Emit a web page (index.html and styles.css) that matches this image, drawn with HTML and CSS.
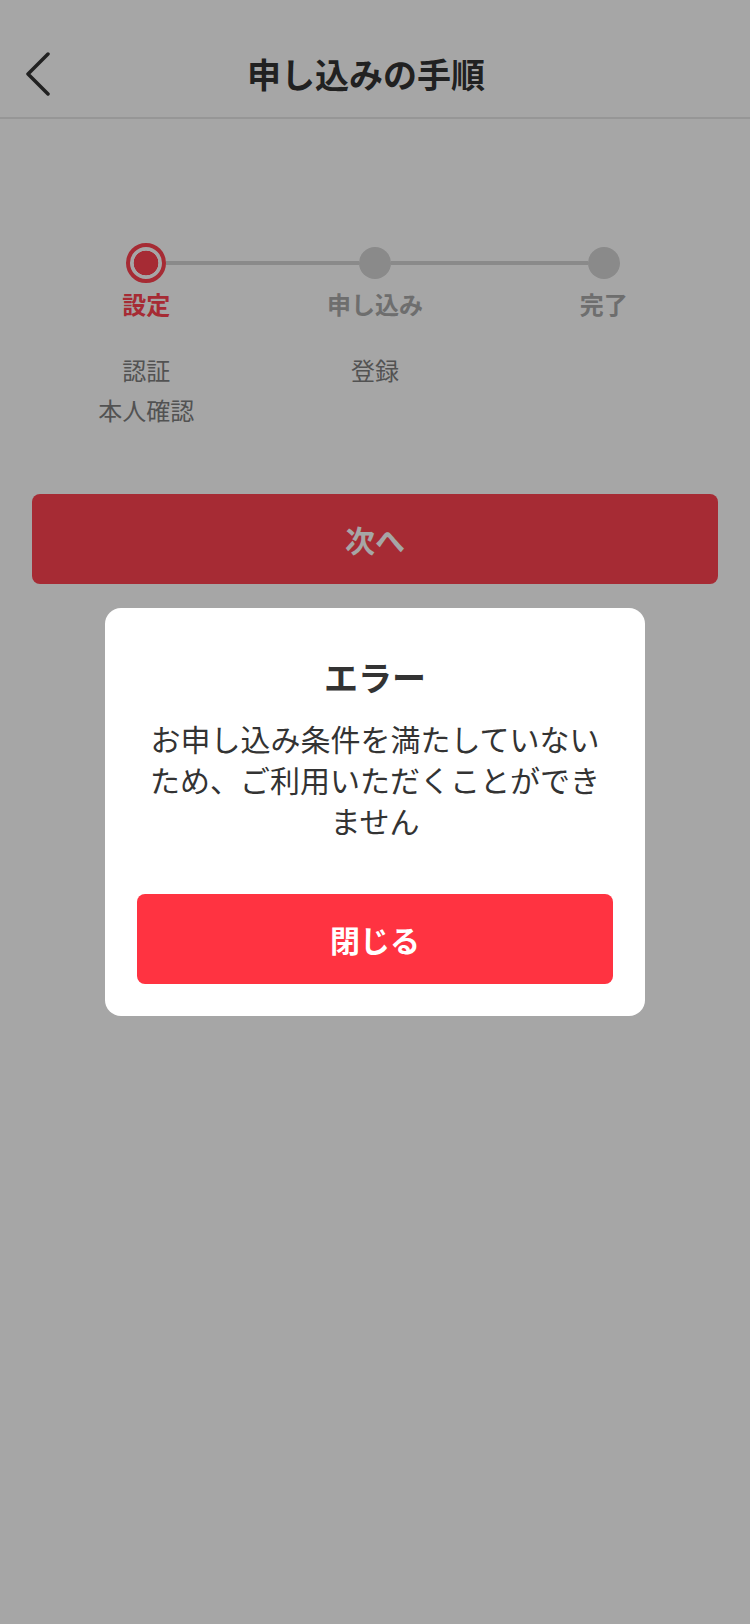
FILE: index.html
```html
<!DOCTYPE html>
<html lang="ja">
<head>
<meta charset="utf-8">
<meta name="viewport" content="width=750">
<title>申し込みの手順</title>
<link rel="stylesheet" href="styles.css">
</head>
<body>
<div class="app">
  <header class="header">
    <div class="navbar">
      <button class="back" aria-label="戻る">
        <svg width="28" height="44" viewBox="0 0 28 44"><polyline points="24,2 4,22 24,42" fill="none" stroke="#333" stroke-width="3.5" stroke-linecap="round" stroke-linejoin="round"/></svg>
      </button>
      <h1 class="nav-title">申し込みの手順</h1>
      <span class="nav-spacer"></span>
    </div>
  </header>

  <main class="main">
    <div class="steps">
      <div class="step">
        <div class="track"><span class="seg seg-off"></span><span class="dot dot-active"></span><span class="seg"></span></div>
        <div class="step-label step-label-active">設定</div>
        <div class="step-sub">認証<br>本人確認</div>
      </div>
      <div class="step">
        <div class="track"><span class="seg"></span><span class="dot"></span><span class="seg"></span></div>
        <div class="step-label">申し込み</div>
        <div class="step-sub">登録</div>
      </div>
      <div class="step">
        <div class="track"><span class="seg"></span><span class="dot"></span><span class="seg seg-off"></span></div>
        <div class="step-label">完了</div>
      </div>
    </div>

    <button class="next-btn">次へ</button>
  </main>

  <div class="backdrop">
    <div class="modal" role="dialog">
      <h2 class="modal-title">エラー</h2>
      <p class="modal-text">お申し込み条件を満たしていないため、ご利用いただくことができません</p>
      <button class="close-btn">閉じる</button>
    </div>
  </div>
</div>
</body>
</html>
```

FILE: styles.css
```css
* { box-sizing: border-box; }

html, body {
  margin: 0;
  padding: 0;
  background: #ffffff;
}

body {
  font-family: "Noto Sans CJK JP", "Noto Sans", sans-serif;
  color: #333333;
}

.app {
  min-height: 1624px;
  background: #ffffff;
}

.header {
  padding-top: 31px;
}

.navbar {
  height: 88px;
  display: grid;
  grid-template-columns: 80px 1fr 98px;
  align-items: center;
  border-bottom: 2px solid #e7e7e7;
}

.back {
  display: flex;
  align-items: center;
  padding: 0 0 0 24px;
  margin: 0;
  border: 0;
  background: none;
  height: 100%;
}

.nav-title {
  margin: 0;
  text-align: center;
  font-size: 34px;
  line-height: 46px;
  font-weight: 700;
  color: #333333;
}

.main {
  padding: 124px 32px 0;
}

.steps {
  display: grid;
  grid-template-columns: repeat(3, 1fr);
}

.step {
  display: flex;
  flex-direction: column;
  align-items: center;
}

.track {
  width: 100%;
  height: 40px;
  display: flex;
  align-items: center;
}

.seg {
  flex: 1;
  height: 4px;
  background: #d4d4d4;
}

.seg-off {
  visibility: hidden;
}

.dot {
  width: 32px;
  height: 32px;
  border-radius: 50%;
  background: #d4d4d4;
  flex: none;
}

.dot-active {
  width: 40px;
  height: 40px;
  border: 4px solid #ff4250;
  background: radial-gradient(circle, #ff4250 0, #ff4250 12px, #ffffff 12.6px);
}

.step-label {
  margin-top: 4px;
  font-size: 24px;
  line-height: 34px;
  font-weight: 700;
  color: #a9a9a9;
}

.step-label-active {
  color: #ff4250;
}

.step-sub {
  margin-top: 29px;
  font-size: 24px;
  line-height: 40px;
  color: #7f7f7f;
  text-align: center;
}

.next-btn {
  display: block;
  width: 100%;
  height: 90px;
  margin-top: 64px;
  border: 0;
  border-radius: 8px;
  background: #ff4250;
  color: #ffffff;
  font-family: inherit;
  font-size: 30px;
  font-weight: 700;
}

.backdrop {
  position: fixed;
  inset: 0;
  background: rgba(0, 0, 0, 0.35);
  display: flex;
  align-items: center;
  justify-content: center;
}

.modal {
  width: 540px;
  background: #ffffff;
  border-radius: 16px;
  padding: 46px 32px 32px;
  text-align: center;
}

.modal-title {
  margin: 0;
  font-size: 34px;
  line-height: 46px;
  font-weight: 700;
  color: #333333;
}

.modal-text {
  margin: 18px 0 0;
  font-size: 30px;
  line-height: 41px;
  color: #333333;
}

.close-btn {
  display: block;
  width: 100%;
  height: 90px;
  margin-top: 53px;
  border: 0;
  border-radius: 8px;
  background: #ff3341;
  color: #ffffff;
  font-family: inherit;
  font-size: 30px;
  font-weight: 700;
}
```
